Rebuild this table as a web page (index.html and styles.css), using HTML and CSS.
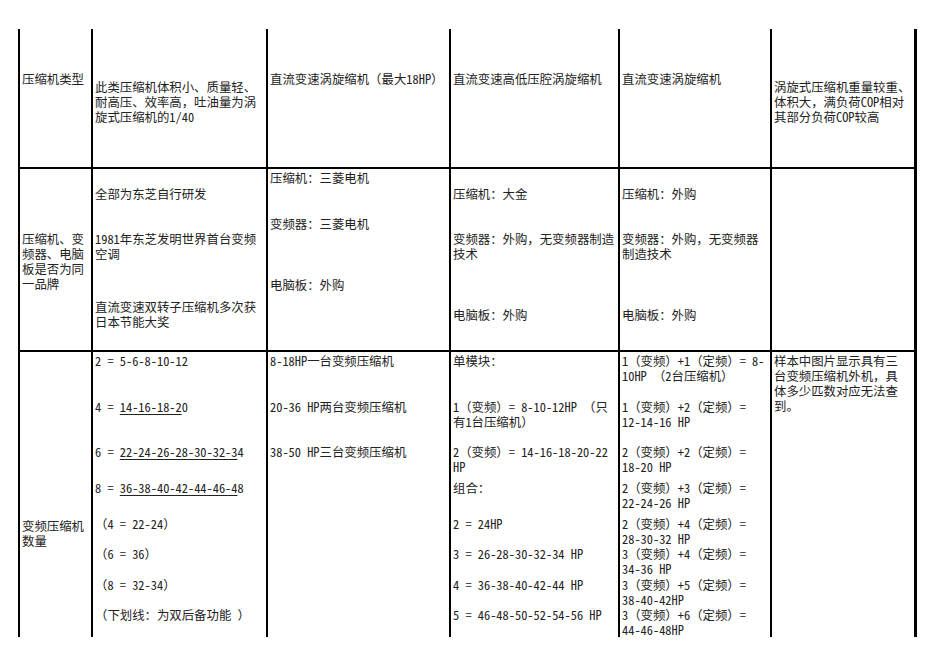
FILE: index.html
```html
<!DOCTYPE html>
<html lang="zh-CN">
<head>
<meta charset="utf-8">
<title>压缩机对比</title>
<link rel="stylesheet" href="styles.css">
</head>
<body>
<div class="sheet">
  <!-- row 1 -->
  <div class="cell pt41">压缩机类型</div>
  <div class="cell pt49">此类压缩机体积小、质量轻、<br>耐高压、效率高，吐油量为涡<br>旋式压缩机的1/40</div>
  <div class="cell pt41">直流变速涡旋缩机（最大18HP）</div>
  <div class="cell pt41">直流变速高低压腔涡旋缩机</div>
  <div class="cell pt41">直流变速涡旋缩机</div>
  <div class="cell last pt49">涡旋式压缩机重量较重、<br>体积大，满负荷COP相对<br>其部分负荷COP较高</div>

  <!-- row 2 -->
  <div class="cell top pt61">压缩机、变<br>频器、电脑<br>板是否为同<br>一品牌</div>
  <div class="cell top pt16">
    <p>全部为东芝自行研发</p>
    <p class="mt30">1981年东芝发明世界首台变频<br>空调</p>
    <p class="mt38">直流变速双转子压缩机多次获<br>日本节能大奖</p>
  </div>
  <div class="cell top pt0">
    <p>压缩机：三菱电机</p>
    <p class="mt31">变频器：三菱电机</p>
    <p class="mt46">电脑板：外购</p>
  </div>
  <div class="cell top pt16">
    <p>压缩机：大金</p>
    <p class="mt30">变频器：外购，无变频器制造<br>技术</p>
    <p class="mt46">电脑板：外购</p>
  </div>
  <div class="cell top pt16">
    <p>压缩机：外购</p>
    <p class="mt30">变频器：外购，无变频器<br>制造技术</p>
    <p class="mt46">电脑板：外购</p>
  </div>
  <div class="cell top last"></div>

  <!-- row 3 -->
  <div class="cell top pt165">变频压缩机<br>数量</div>
  <div class="cell top sub">
    <p>2 = 5-6-8-10-12</p>
    <p>4 = <u>14-16-18-2</u>0</p>
    <p>6 = <u>22-24-26-28-30-32-3</u>4</p>
    <p>8 = <u>36-38-40-42-44-46-4</u>8</p>
    <p>（4 = 22-24）</p>
    <p>（6 = 36）</p>
    <p>（8 = 32-34）</p>
    <p>（下划线：为双后备功能 ）</p>
  </div>
  <div class="cell top sub">
    <p>8-18HP一台变频压缩机</p>
    <p>20-36 HP两台变频压缩机</p>
    <p>38-50 HP三台变频压缩机</p>
  </div>
  <div class="cell top sub">
    <p>单模块：</p>
    <p>1（变频）= 8-10-12HP （只<br>有1台压缩机）</p>
    <p>2（变频）= 14-16-18-20-22<br>HP</p>
    <p>组合：</p>
    <p>2 = 24HP</p>
    <p>3 = 26-28-30-32-34 HP</p>
    <p>4 = 36-38-40-42-44 HP</p>
    <p>5 = 46-48-50-52-54-56 HP</p>
  </div>
  <div class="cell top sub">
    <p>1（变频）+1（定频）= 8-<br>10HP （2台压缩机）</p>
    <p>1（变频）+2（定频）=<br>12-14-16 HP</p>
    <p>2（变频）+2（定频）=<br>18-20 HP</p>
    <p>2（变频）+3（定频）=<br>22-24-26 HP</p>
    <p>2（变频）+4（定频）=<br>28-30-32 HP</p>
    <p>3（变频）+4（定频）=<br>34-36 HP</p>
    <p>3（变频）+5（定频）=<br>38-40-42HP</p>
    <p>3（变频）+6（定频）=<br>44-46-48HP</p>
  </div>
  <div class="cell top last pt0">样本中图片显示具有三<br>台变频压缩机外机，具<br>体多少匹数对应无法查<br>到。</div>
</div>
</body>
</html>
```

FILE: styles.css
```css
html, body {
  margin: 0;
  padding: 0;
  background: #fff;
}

body {
  font-family: "Noto Sans Mono CJK SC", "Noto Sans CJK SC", sans-serif;
  font-size: 12.4px;
  line-height: 15px;
  color: #222;
}

.sheet {
  margin: 29px 0 0 18px;
  width: 899px;
  height: 608px;
  overflow: hidden;
  display: grid;
  grid-template-columns: 73px 175px 183px 169px 152px 147px;
  grid-template-rows: 138px 183px 420px;
}

.cell {
  box-sizing: border-box;
  border-left: 2px solid #000;
  padding-left: 2px;
  white-space: nowrap;
  overflow: hidden;
}

.cell.top {
  border-top: 2px solid #000;
}

.cell.last {
  border-right: 3px solid #000;
}

.cell p {
  margin: 0;
}

.cell u {
  text-decoration: underline;
  text-decoration-thickness: 1px;
  text-underline-offset: 2px;
}

.sub {
  display: grid;
  grid-template-rows: 46px 45px 36px 36px 30px 31px 30px auto;
  align-content: start;
  padding-top: 1.5px;
}

.pt0 { padding-top: 1.5px; }
.pt16 { padding-top: 17.5px; }
.pt41 { padding-top: 42.5px; }
.pt49 { padding-top: 50.5px; }
.pt61 { padding-top: 62.5px; }
.pt165 { padding-top: 166.5px; }

.mt30 { margin-top: 30px !important; }
.mt31 { margin-top: 31px !important; }
.mt38 { margin-top: 38px !important; }
.mt46 { margin-top: 46px !important; }
```
